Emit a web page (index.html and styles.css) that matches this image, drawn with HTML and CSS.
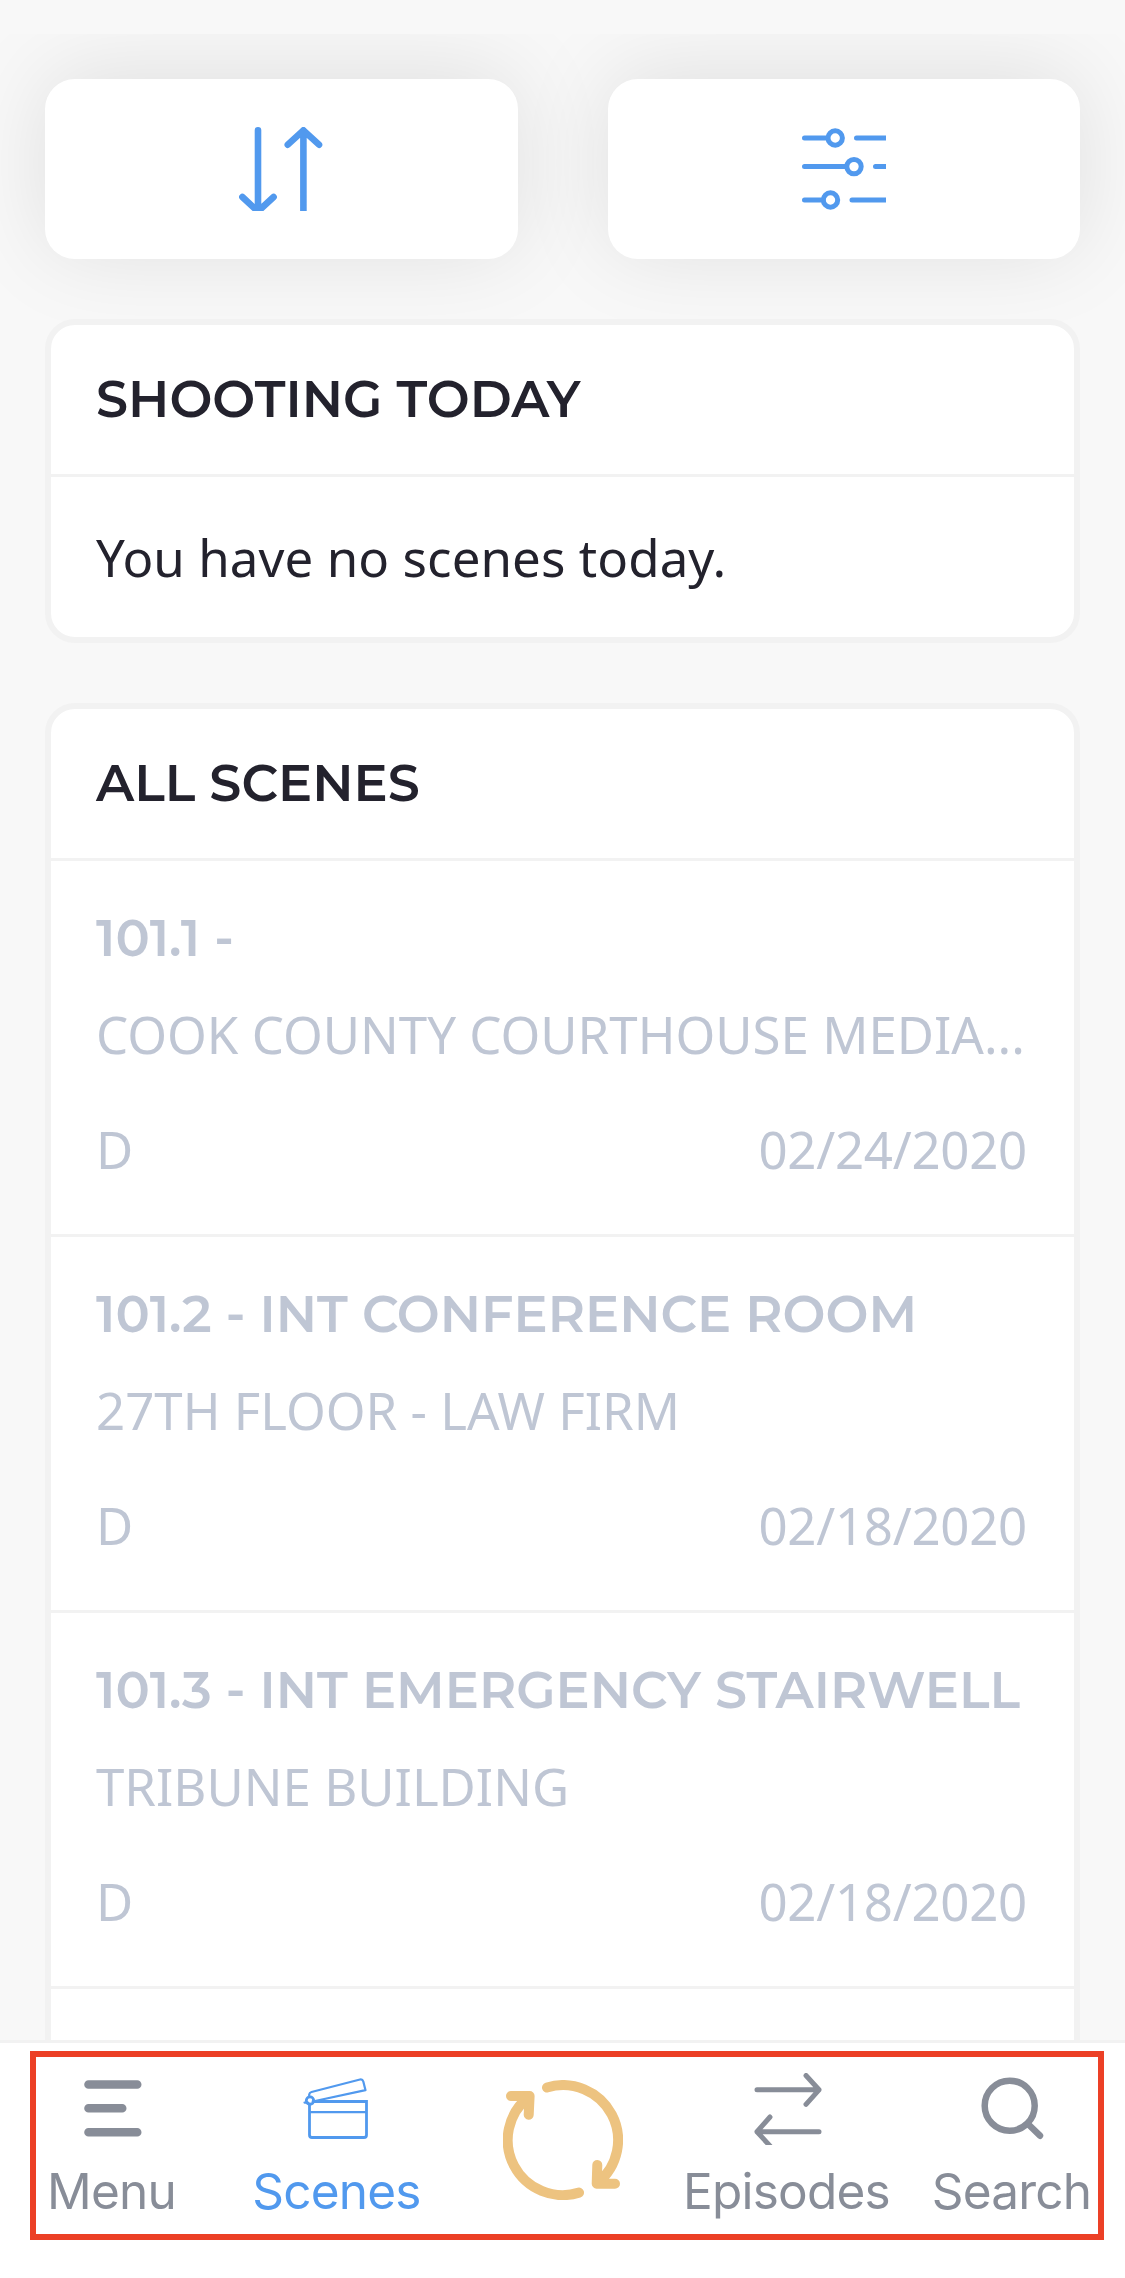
FILE: index.html
```html
<!DOCTYPE html>
<html lang="en">
<head>
  <meta charset="UTF-8">
  <meta name="viewport" content="width=device-width, initial-scale=1.0">
  <title>Scenes</title>
  <link rel="stylesheet" href="styles.css">
</head>
<body>
  <header class="status-bar"></header>

  <main class="content">
    <div class="actions">
      <button class="action" aria-label="Sort">
        <svg width="84" height="84" viewBox="0 0 84 84">
          <path d="M19 3.3V82M3.4 70L19 84.5L34.6 70M64.4 86V3.5M48.8 17.7L64.4 3.3L80 17.7"/>
        </svg>
      </button>
      <button class="action action-filter" aria-label="Filter">
        <svg width="84" height="84" viewBox="0 0 84 84">
          <path d="M2.5 11H25M54.5 11H88M2.5 39.6H44M73.5 39.6H88M2.5 73H21M50 73H88"/>
          <circle cx="33.2" cy="11" r="7.2"/>
          <circle cx="52" cy="39.6" r="7.2"/>
          <circle cx="28.5" cy="73" r="7.2"/>
        </svg>
      </button>
    </div>

    <section class="card">
      <h2 class="card-title">SHOOTING TODAY</h2>
      <p class="empty">You have no scenes today.</p>
    </section>

    <section class="card">
      <h2 class="card-title">ALL SCENES</h2>
      <article class="scene">
        <h3 class="scene-name">101.1 -</h3>
        <p class="scene-place">COOK COUNTY COURTHOUSE MEDIA...</p>
        <div class="scene-info"><span>D</span><span class="scene-date">02/24/2020</span></div>
      </article>
      <article class="scene">
        <h3 class="scene-name">101.2 - INT CONFERENCE ROOM</h3>
        <p class="scene-place">27TH FLOOR - LAW FIRM</p>
        <div class="scene-info"><span>D</span><span class="scene-date">02/18/2020</span></div>
      </article>
      <article class="scene">
        <h3 class="scene-name">101.3 - INT EMERGENCY STAIRWELL</h3>
        <p class="scene-place">TRIBUNE BUILDING</p>
        <div class="scene-info"><span>D</span><span class="scene-date">02/18/2020</span></div>
      </article>
      <article class="scene"></article>
    </section>
  </main>

  <nav class="tab-bar">
    <a class="tab">
      <svg class="icon-menu" width="75" height="75" viewBox="0 0 75 75">
        <path d="M13.5 16.5H62.2M13.5 40.3H47.2M13.5 64.3H62.2"/>
      </svg>
      <span class="tab-label">Menu</span>
    </a>
    <a class="tab active">
      <svg class="icon-scenes" width="75" height="75" viewBox="0 0 75 75">
        <path class="board" d="M9.5 36V67Q9.5 69.5 12 69.5H64Q66.5 69.5 66.5 67V33.5H13"/>
        <path class="thin" d="M10 44.2H66M9.2 29V26.5Q9.5 24.5 11.5 24L60 11.5Q62.5 11 63.3 13.5L65.5 22.2L15 33M4.5 34.6H8"/>
        <circle cx="10" cy="32.6" r="3.7"/>
      </svg>
      <span class="tab-label">Scenes</span>
    </a>
    <a class="tab">
      <svg class="icon-sync" width="120" height="120" viewBox="0 0 120 120">
        <path d="M44 7.5A55 55 0 0 1 94.5 103M94.3 85L93.7 103.7H112"/>
        <path d="M76 112.6A55 55 0 0 1 25.5 17M8 16H26.6L25.7 34.7"/>
      </svg>
    </a>
    <a class="tab">
      <svg class="icon-episodes" width="75" height="72" viewBox="0 0 75 72">
        <path d="M7 16.8H69M56 2.5L69 16.8L56 31.3M69 58.7H7M20 44L7 58.7L20 73"/>
      </svg>
      <span class="tab-label">Episodes</span>
    </a>
    <a class="tab">
      <svg class="icon-search" width="75" height="75" viewBox="0 0 75 75">
        <circle cx="34.7" cy="37.7" r="25"/>
        <path d="M53 56L65 67.7"/>
      </svg>
      <span class="tab-label">Search</span>
    </a>
    <div class="highlight"></div>
  </nav>
</body>
</html>
```
FILE: styles.css
```css
* {
  box-sizing: border-box;
}

body {
  display: flex;
  flex-direction: column;
  height: 2278px;
  margin: 0;
  overflow: hidden;
  background-color: #f8f8f8;
  color: #23222d;
  font-family: "Noto Sans", sans-serif;
  font-size: 51px;
}

h2,
h3,
p {
  margin: 0;
  white-space: nowrap;
}

svg {
  display: block;
  fill: none;
  stroke: currentColor;
  stroke-linecap: round;
  stroke-linejoin: round;
}

.status-bar {
  flex: none;
  height: 34px;
}

.content {
  flex: 1;
  min-height: 0;
  padding: 45px 45px 0;
  overflow: hidden;
}

/* Sort and filter buttons */
.actions {
  display: grid;
  grid-template-columns: 1fr 1fr;
  gap: 90px;
}

.action {
  display: flex;
  align-items: center;
  justify-content: center;
  height: 180px;
  padding: 0;
  border: none;
  border-radius: 30px;
  background-color: #fff;
  color: #5199ee;
  box-shadow: 0 -6px 90px rgba(0, 0, 0, 0.1);
  stroke-width: 6.6px;
}

.action-filter {
  stroke-width: 5px;
}

/* Cards */
.card {
  position: relative;
  margin-top: 60px;
  border: 6px solid #f2f2f2;
  border-radius: 30px;
  background-color: #fff;
}

.card-title {
  height: 152px;
  padding: 0 45px;
  border-bottom: 3px solid #f2f2f2;
  font-family: Montserrat, Inter, sans-serif;
  font-size: 51px;
  font-weight: 600;
  line-height: 149px;
}

.empty {
  padding: 0 45px;
  letter-spacing: 0.08px;
  line-height: 160px;
}

.scene {
  height: 376px;
  padding: 45px 45px 50px;
  border-bottom: 3px solid #f2f2f2;
  color: #bfc6d4;
}

.scene-name {
  font-family: Montserrat, Inter, sans-serif;
  font-size: 51px;
  font-weight: 600;
  line-height: 64px;
}

.scene-place {
  margin: 29px 0 45px;
  line-height: 70px;
}

.scene-info {
  display: flex;
  justify-content: space-between;
  line-height: 70px;
}

.scene-date {
  padding-right: 2px;
  letter-spacing: -0.28px;
}

/* Bottom navigation */
.tab-bar {
  position: relative;
  display: grid;
  grid-template-columns: repeat(5, 1fr);
  flex: none;
  height: 238px;
  border-top: 3px solid #f2f2f2;
  background-color: #fff;
  color: #888d98;
}

.tab {
  display: flex;
  flex-direction: column;
  align-items: center;
  padding-top: 25px;
}

.tab.active {
  color: #5199ee;
}

.tab-label {
  margin-top: auto;
  margin-bottom: 54px;
  padding-right: 2px;
  font-family: Inter, sans-serif;
  font-size: 49.5px;
  letter-spacing: -0.8px;
  line-height: 66px;
}

.icon-menu {
  stroke-width: 8.6px;
}

.icon-scenes {
  stroke-width: 2.8px;
}

.icon-scenes .board {
  stroke-linejoin: miter;
}

.icon-scenes .thin {
  stroke-width: 2.2px;
}

.icon-sync {
  margin-top: 12px;
  color: #edc380;
  stroke-width: 10px;
}

.icon-episodes {
  margin-top: 5px;
  stroke-width: 5px;
}

.icon-search {
  stroke-width: 6.5px;
}

/* Frame around the navigation */
.highlight {
  position: absolute;
  top: 8px;
  left: 30px;
  width: 1074px;
  height: 189px;
  border: 6px solid #ec4026;
}
```
